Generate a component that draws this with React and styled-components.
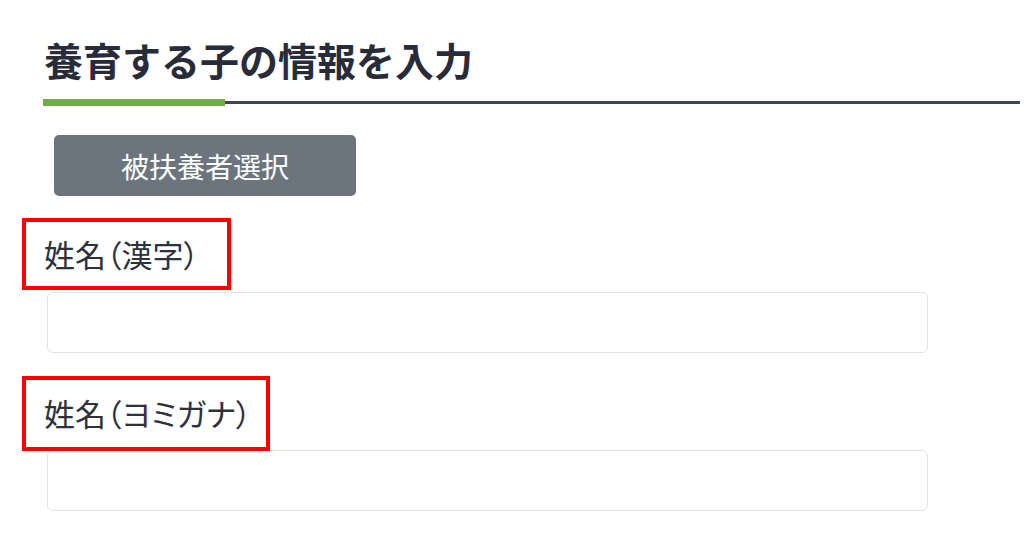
import React from "react";
import styled, { createGlobalStyle } from "styled-components";

const GlobalStyle = createGlobalStyle`
  html, body {
    margin: 0;
    padding: 0;
    background: #ffffff;
  }
  body {
    font-family: "Noto Sans CJK JP", "Noto Sans", sans-serif;
    color: #2a2e3b;
  }
`;

export default function App() {
  return (
    <>
      <GlobalStyle />
      <Page>
        <Title>養育する子の情報を入力</Title>
        <TitleRule>
          <Accent />
          <Rest />
        </TitleRule>
        <SelectButton type="button">被扶養者選択</SelectButton>
        <Field $top={22}>
          <Label $width={209} $gap={2}>
            姓名（漢字）
          </Label>
          <TextInput type="text" />
        </Field>
        <Field $top={23}>
          <Label $width={248} $height={75} $gap={-1}>
            姓名（ヨミガナ）
          </Label>
          <TextInput type="text" />
        </Field>
      </Page>
    </>
  );
}

const Page = styled.main`
  display: flex;
  flex-direction: column;
  align-items: flex-start;
  padding: 0 4px 0 22px;
`;

const Title = styled.h1`
  margin: 33px 0 0 22px;
  font-size: 39px;
  line-height: 52px;
  font-weight: 700;
  color: #282c3a;
`;

const TitleRule = styled.div`
  display: flex;
  align-items: center;
  align-self: stretch;
  margin: 14px 0 0 21px;
`;

const Accent = styled.div`
  width: 182px;
  height: 7px;
  background: #72ad4c;
`;

const Rest = styled.div`
  flex: 1;
  height: 3px;
  background: #3e4555;
`;

const SelectButton = styled.button`
  margin: 29px 0 0 32px;
  width: 302px;
  height: 61px;
  border: none;
  border-radius: 5px;
  background: #6c757d;
  color: #ffffff;
  font-family: "Noto Sans CJK JP", "Noto Sans", sans-serif;
  font-size: 28px;
  font-weight: 400;
  cursor: pointer;
`;

const Field = styled.div`
  display: flex;
  flex-direction: column;
  align-items: flex-start;
  margin-top: ${(p) => p.$top}px;
`;

const Label = styled.label`
  box-sizing: border-box;
  display: flex;
  align-items: center;
  width: ${(p) => p.$width}px;
  height: ${(p) => p.$height || 72}px;
  margin-bottom: ${(p) => p.$gap}px;
  padding: 0 0 2px 18px;
  border: 4px solid #ff0000;
  font-size: 31px;
  font-feature-settings: "palt";
  color: #2e323c;
  position: relative;
  z-index: 1;
`;

const TextInput = styled.input`
  box-sizing: border-box;
  margin-left: 25px;
  width: 881px;
  height: 61px;
  border: 1px solid #dfe2e6;
  border-radius: 6px;
  background: #ffffff;
  outline: none;
`;
